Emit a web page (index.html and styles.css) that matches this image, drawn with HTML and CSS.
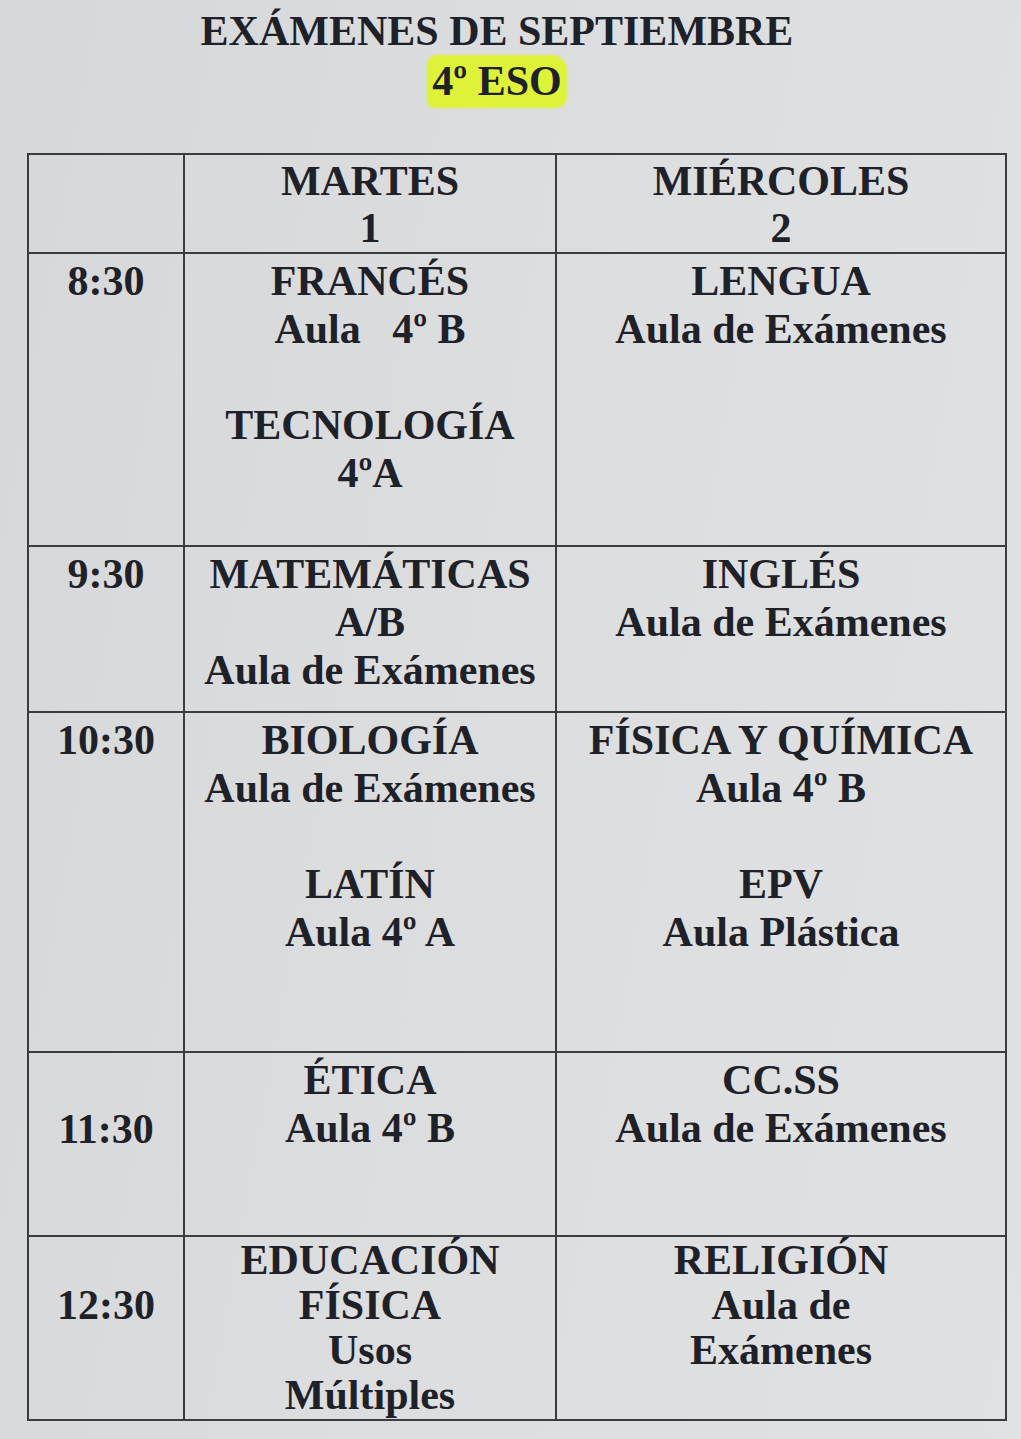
FILE: index.html
```html
<!DOCTYPE html>
<html lang="es">
<head>
<meta charset="utf-8">
<title>Exámenes de septiembre</title>
<link rel="stylesheet" href="styles.css">
</head>
<body>
<div class="page">
  <header class="title">
    <div class="title-line">EXÁMENES DE SEPTIEMBRE</div>
    <div class="title-line"><span class="mark">4º ESO</span></div>
  </header>
  <table class="schedule">
    <colgroup>
      <col class="c-time">
      <col class="c-day1">
      <col class="c-day2">
    </colgroup>
    <tr class="r-head">
      <td></td>
      <td>MARTES<br>1</td>
      <td>MIÉRCOLES<br>2</td>
    </tr>
    <tr class="r-1">
      <td>8:30</td>
      <td>FRANCÉS<br>Aula&nbsp;&nbsp; 4º B<br>&nbsp;<br>TECNOLOGÍA<br>4ºA</td>
      <td>LENGUA<br>Aula de Exámenes</td>
    </tr>
    <tr class="r-2">
      <td>9:30</td>
      <td>MATEMÁTICAS<br>A/B<br>Aula de Exámenes</td>
      <td>INGLÉS<br>Aula de Exámenes</td>
    </tr>
    <tr class="r-3">
      <td>10:30</td>
      <td>BIOLOGÍA<br>Aula de Exámenes<br>&nbsp;<br>LATÍN<br>Aula 4º A</td>
      <td>FÍSICA Y QUÍMICA<br>Aula 4º B<br>&nbsp;<br>EPV<br>Aula Plástica</td>
    </tr>
    <tr class="r-4">
      <td class="t-mid4">11:30</td>
      <td>ÉTICA<br>Aula 4º B</td>
      <td>CC.SS<br>Aula de Exámenes</td>
    </tr>
    <tr class="r-5">
      <td class="t-mid5">12:30</td>
      <td class="tight">EDUCACIÓN<br>FÍSICA<br>Usos<br>Múltiples</td>
      <td class="tight">RELIGIÓN<br>Aula de<br>Exámenes</td>
    </tr>
  </table>
</div>
</body>
</html>
```

FILE: styles.css
```css
html, body {
  margin: 0;
  padding: 0;
}
body {
  width: 1021px;
  height: 1439px;
  overflow: hidden;
  background: linear-gradient(100deg, #d6d7d9 0%, #dcdddf 45%, #e0e1e3 100%);
  color: #1f2129;
  font-family: "Liberation Serif", "Times New Roman", serif;
  font-weight: bold;
}
.page {
  padding: 6px 0 0 27px;
}
.title {
  width: 940px;
  text-align: center;
  font-size: 42px;
  line-height: 50px;
  margin-bottom: 47px;
}
.mark {
  background: #def23a;
  padding: 2px 4px 3px 4px;
  border-radius: 8px 14px 10px 6px;
  box-shadow: 0 0 2px 1px #def23a;
}
.schedule {
  border-collapse: collapse;
  table-layout: fixed;
  width: 978px;
  font-size: 42px;
  line-height: 48px;
}
.c-time { width: 156px; }
.c-day1 { width: 372px; }
.c-day2 { width: 450px; }
.schedule td {
  border: 2px solid #3a3c42;
  text-align: center;
  vertical-align: top;
  padding: 3px 0 0 0;
  white-space: nowrap;
}
.r-head { height: 99px; }
.r-head td { padding-top: 3px; line-height: 47px; }
.r-1 { height: 293px; }
.r-2 { height: 166px; }
.r-3 { height: 340px; }
.r-4 { height: 184px; }
.r-5 { height: 184px; }
.r-1 td, .r-2 td, .r-3 td, .r-4 td { padding-top: 3px; }
.schedule td.t-mid4 { padding-top: 52px; }
.r-5 td { padding-top: 1px; }
.schedule td.t-mid5 { padding-top: 44px; }
.schedule td.tight { line-height: 45px; }
```
